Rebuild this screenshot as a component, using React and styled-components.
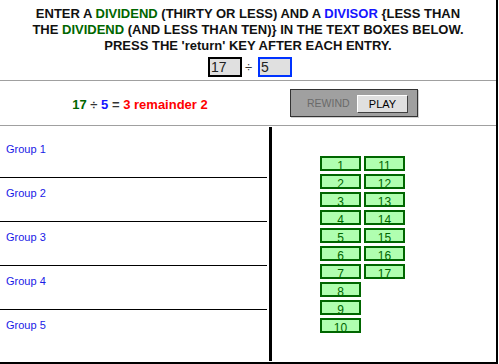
import React from 'react';
import styled, { createGlobalStyle } from 'styled-components';

const GlobalStyle = createGlobalStyle`
  body {
    margin: 0;
    background: #fff;
    font-family: "Liberation Sans", Arial, sans-serif;
  }
`;

const Frame = styled.div`
  width: 498px;
  height: 364px;
  box-sizing: border-box;
  border-right: 2px solid #000;
  border-bottom: 2px solid #000;
  display: flex;
  flex-direction: column;
  overflow: hidden;
`;

const Header = styled.div`
  padding-top: 6px;
  padding-bottom: 3px;
  border-bottom: 1px solid #a0a0a0;
  text-align: center;
`;

const Instructions = styled.div`
  font-size: 13px;
  font-weight: bold;
  line-height: 16px;
  color: #111;
`;

const Word = styled.span`
  color: ${p => p.color};
`;

const InputRow = styled.div`
  margin-top: 3px;
  padding-left: 4px;
  display: flex;
  justify-content: center;
  align-items: center;
  height: 20px;
`;

const NumBox = styled.div`
  width: 34px;
  height: 20px;
  box-sizing: border-box;
  border: 2px solid ${p => p.border};
  background: #e0e0e0;
  font-size: 14px;
  line-height: 16px;
  color: #222;
  text-align: left;
  padding-left: 1px;
`;

const DivSign = styled.span`
  font-size: 13px;
  color: #333;
  margin: 0 6px 0 3px;
`;

const EquationRow = styled.div`
  height: 44px;
  border-bottom: 1px solid #a0a0a0;
  display: flex;
  align-items: center;
`;

const Equation = styled.div`
  width: 280px;
  text-align: center;
  font-size: 13px;
  font-weight: bold;
  padding-top: 2px;
`;

const Controls = styled.div`
  margin-left: 10px;
  width: 128px;
  height: 28px;
  box-sizing: border-box;
  border: 1px solid #333;
  background: #a0a0a0;
  box-shadow: 1px 1px 0 #d0d0d0;
  display: flex;
  align-items: center;
  padding-left: 16px;
`;

const Rewind = styled.span`
  font-size: 10.5px;
  color: #6a6a6a;
  width: 50px;
`;

const PlayButton = styled.div`
  width: 51px;
  height: 18px;
  box-sizing: border-box;
  background: #e0e0e0;
  border-top: 1px solid #fff;
  border-left: 1px solid #fff;
  border-right: 1px solid #404040;
  border-bottom: 1px solid #404040;
  font-size: 11px;
  line-height: 16px;
  text-align: center;
  color: #000;
  margin-top: 2px;
`;

const Body = styled.div`
  flex: 1;
  display: flex;
`;

const Groups = styled.div`
  width: 267px;
  padding-top: 8px;
`;

const Group = styled.div`
  height: 43px;
  border-bottom: ${p => (p.last ? 'none' : '1px solid #000')};
`;

const GroupLabel = styled.div`
  padding: 9px 0 0 6px;
  font-size: 11px;
  line-height: 13px;
  color: #1a1ae6;
`;

const Divider = styled.div`
  width: 3px;
  margin: 1px 0 1px 2px;
  background: #000;
`;

const TileArea = styled.div`
  flex: 1;
  padding: 30px 0 0 48px;
`;

const TileGrid = styled.div`
  display: grid;
  grid-template-rows: repeat(10, 15px);
  grid-auto-flow: column;
  grid-auto-columns: 41px;
  row-gap: 3px;
  column-gap: 3px;
`;

const Tile = styled.div`
  box-sizing: border-box;
  border: 2px solid #006600;
  background: #b0ffb0;
  color: #006600;
  font-size: 12px;
  line-height: 12px;
  padding-top: 2px;
  text-align: center;
`;

const groups = [1, 2, 3, 4, 5];
const tiles = Array.from({ length: 17 }, (_, i) => i + 1);

export default function App() {
  return (
    <Frame>
      <GlobalStyle />
      <Header>
        <Instructions>
          ENTER A <Word color="#006600">DIVIDEND</Word> (THIRTY OR LESS) AND A{' '}
          <Word color="#1414ff">DIVISOR</Word> {'{'}LESS THAN
          <br />
          THE <Word color="#006600">DIVIDEND</Word> (AND LESS THAN TEN){'}'} IN THE TEXT BOXES BELOW.
          <br />
          PRESS THE 'return' KEY AFTER EACH ENTRY.
        </Instructions>
        <InputRow>
          <NumBox border="#000">17</NumBox>
          <DivSign>÷</DivSign>
          <NumBox border="#0033ff">5</NumBox>
        </InputRow>
      </Header>

      <EquationRow>
        <Equation>
          <Word color="#006600">17</Word> <Word color="#333">÷</Word>{' '}
          <Word color="#1414ff">5</Word> <Word color="#333">=</Word>{' '}
          <Word color="#ff0000">3 remainder 2</Word>
        </Equation>
        <Controls>
          <Rewind>REWIND</Rewind>
          <PlayButton>PLAY</PlayButton>
        </Controls>
      </EquationRow>

      <Body>
        <Groups>
          {groups.map(g => (
            <Group key={g} last={g === 5}>
              <GroupLabel>Group {g}</GroupLabel>
            </Group>
          ))}
        </Groups>
        <Divider />
        <TileArea>
          <TileGrid>
            {tiles.map(n => (
              <Tile key={n}>{n}</Tile>
            ))}
          </TileGrid>
        </TileArea>
      </Body>
    </Frame>
  );
}
